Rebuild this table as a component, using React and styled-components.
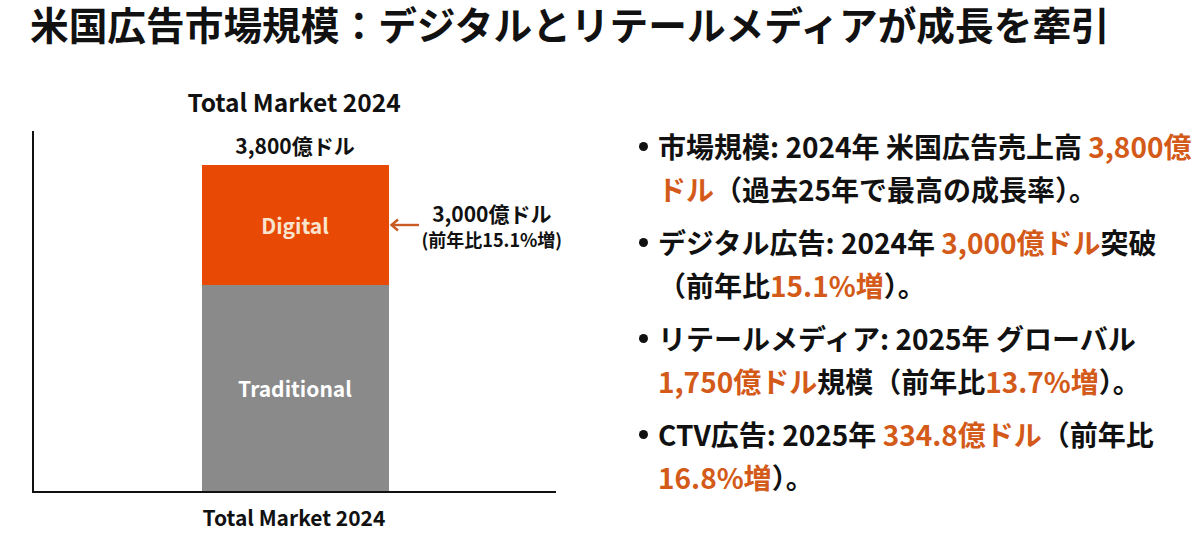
import React from 'react';
import styled, { createGlobalStyle } from 'styled-components';

const GlobalStyle = createGlobalStyle`
  body {
    margin: 0;
    background: #fff;
    font-family: "Noto Sans CJK JP", "Noto Sans", sans-serif;
    font-weight: 700;
    color: #111;
  }
`;

const Page = styled.div`
  width: 1200px;
  height: 540px;
  padding-left: 30px;
  box-sizing: border-box;
  overflow: hidden;
`;

const Title = styled.h1`
  margin: 0;
  font-size: 38.7px;
  line-height: 46px;
  font-weight: 700;
`;

const Content = styled.div`
  display: flex;
  margin-top: 41px;
`;

const ChartColumn = styled.div`
  width: 524px;
  display: flex;
  flex-direction: column;
  align-items: stretch;
  margin-left: 2px;
`;

const ChartTitle = styled.div`
  font-size: 24.5px;
  line-height: 30px;
  text-align: center;
  margin-bottom: 14px;
`;

const Axes = styled.div`
  height: 362px;
  box-sizing: border-box;
  border-left: 2px solid #111;
  border-bottom: 2px solid #111;
  display: flex;
  flex-direction: column;
  align-items: center;
  justify-content: flex-end;
`;

const BarLabel = styled.div`
  font-size: 21px;
  line-height: 24px;
  margin-bottom: 8px;
`;

const Segment = styled.div`
  position: relative;
  width: 187px;
  height: ${p => p.h}px;
  background: ${p => p.bg};
  color: ${p => p.fg};
  display: flex;
  align-items: center;
  justify-content: center;
  font-size: 21px;
`;

const Callout = styled.div`
  position: absolute;
  left: 100%;
  top: 50%;
  transform: translateY(-50%);
  display: flex;
  align-items: center;
  color: #111;
`;

const CalloutText = styled.div`
  display: flex;
  flex-direction: column;
  align-items: center;
  margin-left: 1px;
  white-space: nowrap;
`;

const CalloutMain = styled.div`
  font-size: 21px;
  line-height: 28px;
`;

const CalloutSub = styled.div`
  font-size: 18px;
  line-height: 24px;
`;

const AxisLabel = styled.div`
  font-size: 21px;
  line-height: 24px;
  text-align: center;
  margin-top: 12px;
`;

const List = styled.ul`
  list-style: none;
  margin: 38px 0 0 83px;
  padding: 0;
  display: flex;
  flex-direction: column;
  gap: 10px;
`;

const Item = styled.li`
  display: flex;
  align-items: flex-start;
`;

const Dot = styled.span`
  flex: none;
  width: 9px;
  height: 9px;
  border-radius: 50%;
  background: #111;
  margin-top: 17px;
  margin-right: 10px;
`;

const Lines = styled.div`
  font-size: 28px;
  line-height: 43px;
  white-space: nowrap;
`;

const Hi = styled.span`
  color: #d35a18;
`;

const Arrow = () => (
  <svg width="32" height="14" viewBox="0 0 32 14">
    <line x1="3" y1="7" x2="30" y2="7" stroke="#c95a24" strokeWidth="2.4" />
    <polyline points="9,1.5 2.5,7 9,12.5" fill="none" stroke="#c95a24" strokeWidth="2.4" />
  </svg>
);

export default function App() {
  return (
    <Page>
      <GlobalStyle />
      <Title>米国広告市場規模：デジタルとリテールメディアが成長を牽引</Title>
      <Content>
        <ChartColumn>
          <ChartTitle>Total Market 2024</ChartTitle>
          <Axes>
            <BarLabel>3,800億ドル</BarLabel>
            <Segment h={120} bg="#e84a06" fg="#f8e4cf">
              Digital
              <Callout>
                <Arrow />
                <CalloutText>
                  <CalloutMain>3,000億ドル</CalloutMain>
                  <CalloutSub>(前年比15.1%増)</CalloutSub>
                </CalloutText>
              </Callout>
            </Segment>
            <Segment h={206} bg="#8a8a8a" fg="#fff">Traditional</Segment>
          </Axes>
          <AxisLabel>Total Market 2024</AxisLabel>
        </ChartColumn>
        <List>
          <Item>
            <Dot />
            <Lines>
              市場規模: 2024年 米国広告売上高 <Hi>3,800億</Hi><br />
              <Hi>ドル</Hi>（過去25年で最高の成長率）。
            </Lines>
          </Item>
          <Item>
            <Dot />
            <Lines>
              デジタル広告: 2024年 <Hi>3,000億ドル</Hi>突破<br />
              （前年比<Hi>15.1%増</Hi>）。
            </Lines>
          </Item>
          <Item>
            <Dot />
            <Lines>
              リテールメディア: 2025年 グローバル<br />
              <Hi>1,750億ドル</Hi>規模（前年比<Hi>13.7%増</Hi>）。
            </Lines>
          </Item>
          <Item>
            <Dot />
            <Lines>
              CTV広告: 2025年 <Hi>334.8億ドル</Hi>（前年比<br />
              <Hi>16.8%増</Hi>）。
            </Lines>
          </Item>
        </List>
      </Content>
    </Page>
  );
}
